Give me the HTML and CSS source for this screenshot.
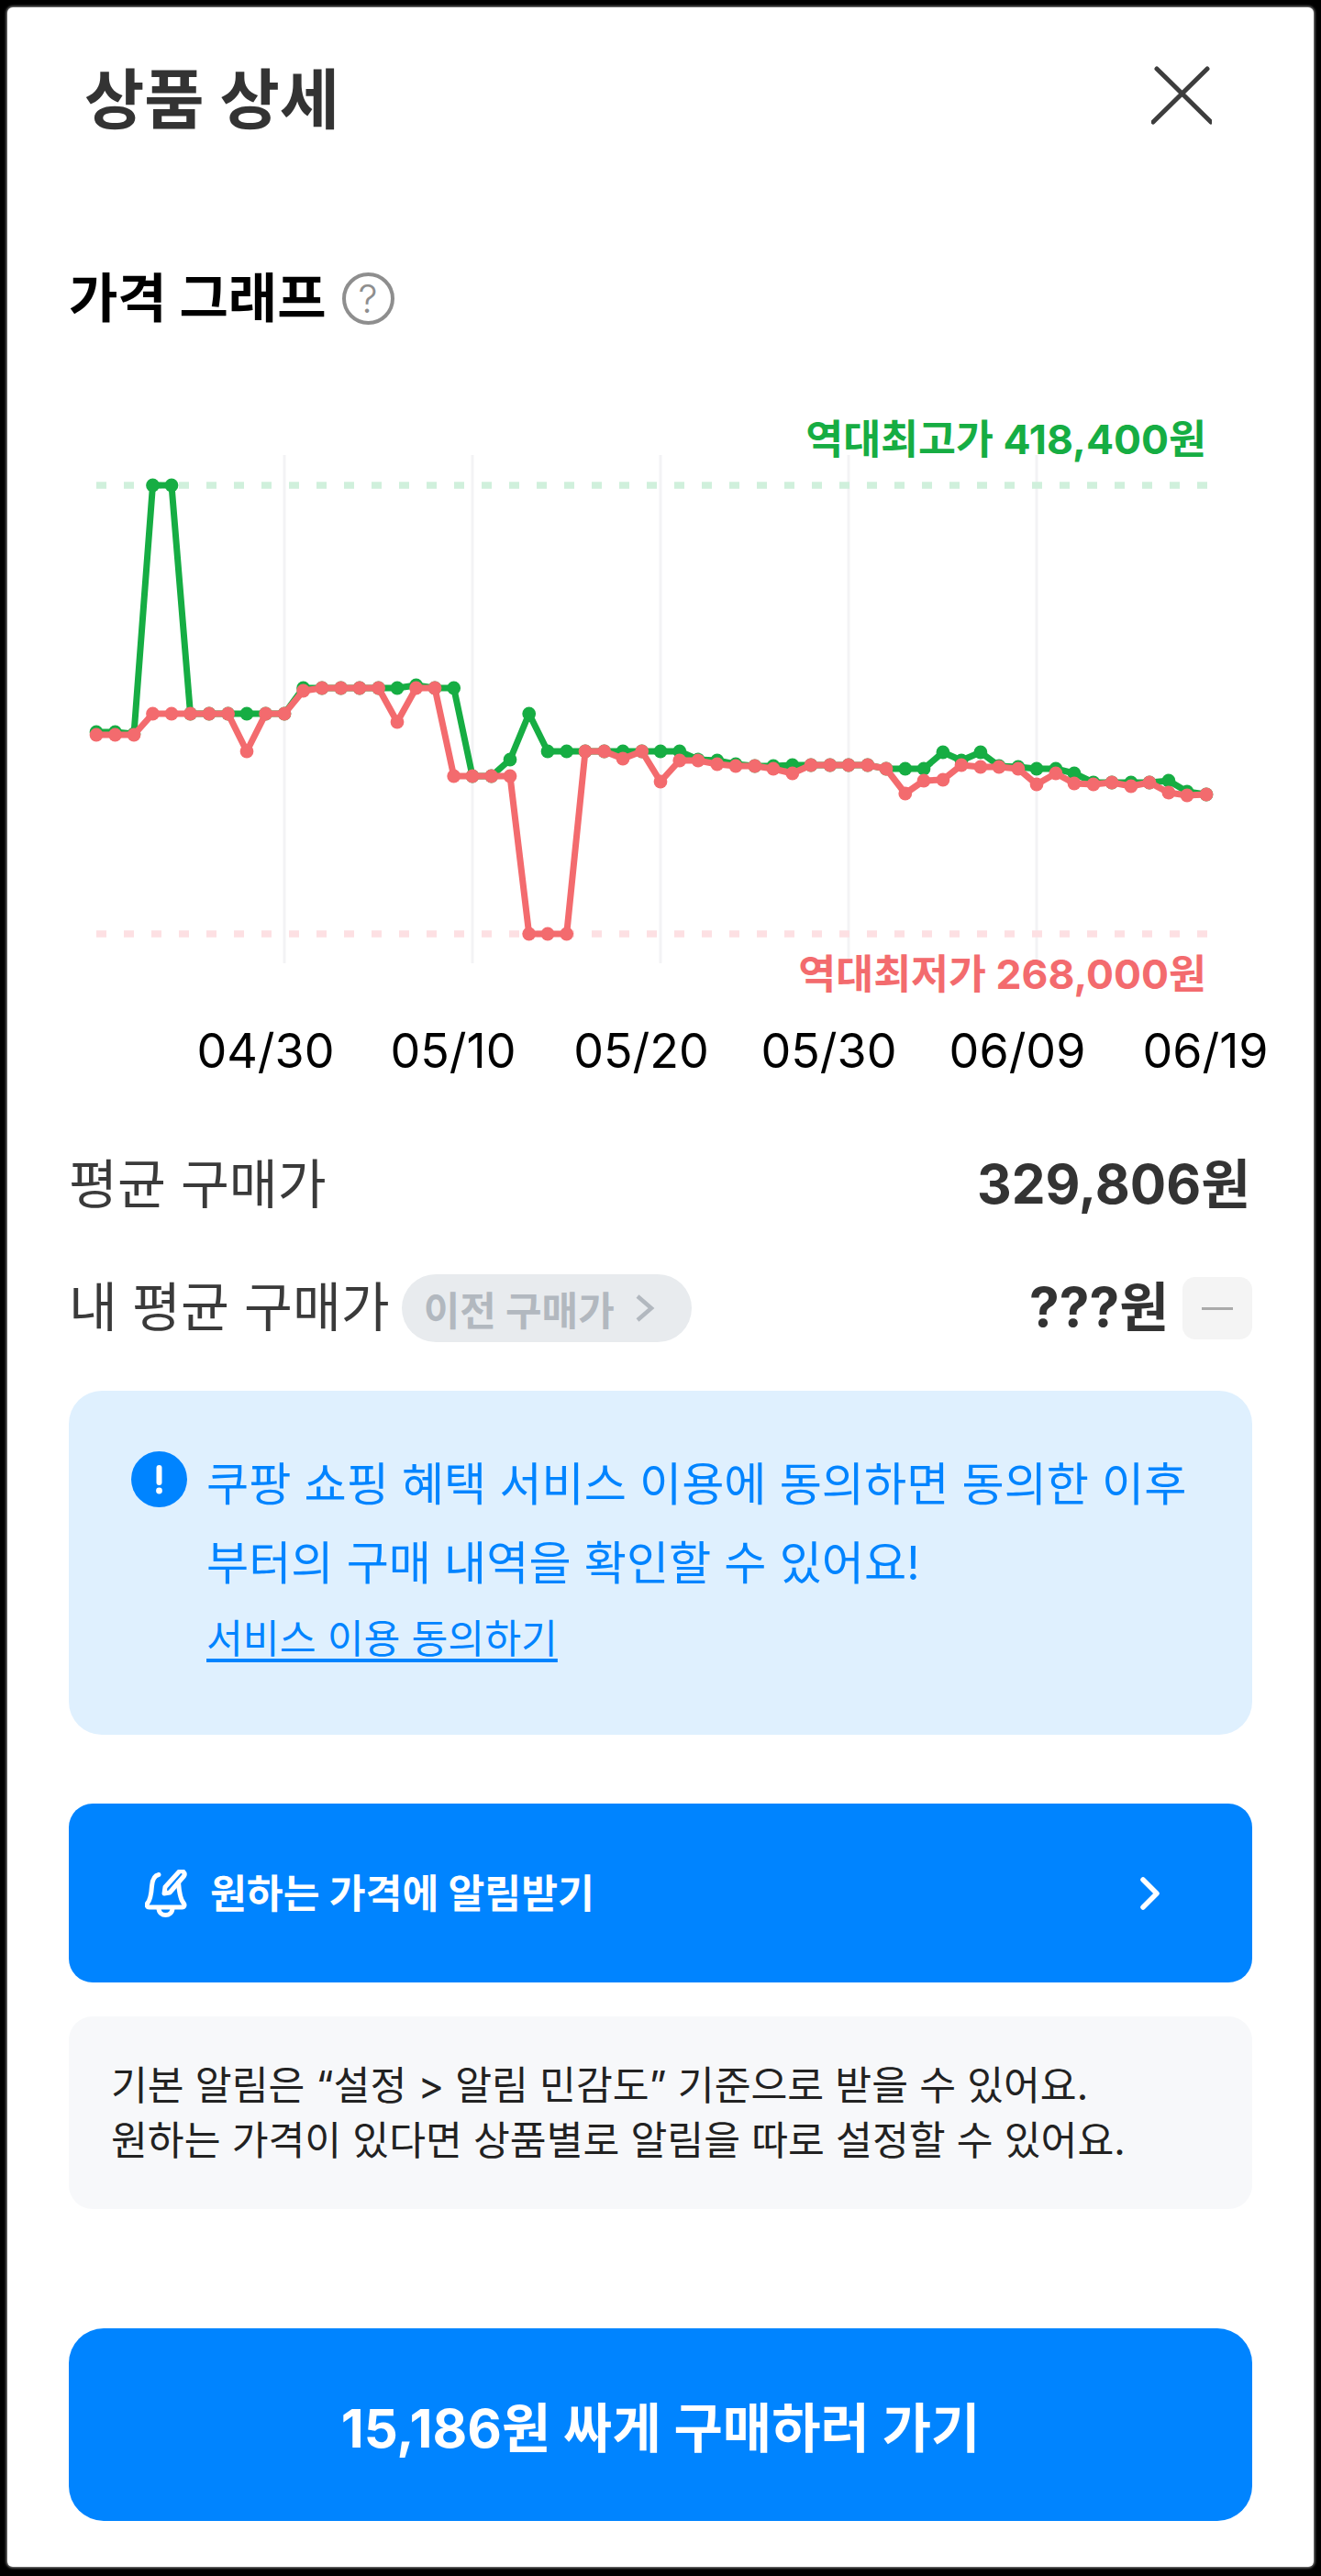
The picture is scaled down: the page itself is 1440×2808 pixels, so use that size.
FILE: index.html
```html
<!DOCTYPE html>
<html lang="ko">
<head>
    <meta charset="utf-8">
    <title>상품 상세</title>
    <link rel="stylesheet" href="styles.css">
</head>
<body>
    <main class="panel">
        <header class="header">
            <h1 class="header-title">상품 상세</h1>
            <svg class="close-icon" width="66" height="64" viewBox="0 0 66 64">
                <path d="M6 3L65 61M61 3L2 61"/>
            </svg>
        </header>

        <div class="section-title">
            <h2>가격 그래프</h2>
            <span class="help-icon">?</span>
        </div>

        <svg class="chart" width="1290" height="730" viewBox="75 440 1290 730">
            <defs>
                <marker id="dotGreen" markerUnits="userSpaceOnUse" markerWidth="16" markerHeight="16" refX="8" refY="8">
                    <circle class="dot-green" cx="8" cy="8" r="7.4"/>
                </marker>
                <marker id="dotRed" markerUnits="userSpaceOnUse" markerWidth="16" markerHeight="16" refX="8" refY="8">
                    <circle class="dot-red" cx="8" cy="8" r="7.4"/>
                </marker>
            </defs>

            <!-- grid -->
            <path class="grid" d="M310 496V1050M515 496V1050M720 496V1050M925 496V1050M1130 496V1050"/>
            <path class="limit-high" d="M105 529H1316"/>
            <path class="limit-low" d="M105 1018H1316"/>

            <text class="limit-label label-high" x="1315" y="495">역대최고가 418,400원</text>
            <text class="limit-label label-low" x="1315" y="1078">역대최저가 268,000원</text>

            <!-- 최고가 -->
            <polyline class="line-green" points="105,798 125.5,798 146,800 166.5,529 187,529 207.5,778 228,778 248.6,778 269,778 289.6,778 310,778 330.6,750 351,750 371.6,750 392,750 412.6,750 433,750 453.6,747 474,750 494.7,750 515,846 535.7,846 556,828 576.7,778 597,819 617.7,819 638,819 658.7,819 679,819 699.7,819 720,819 740.8,819 761,828 781.8,829 802,833 822.8,835 843,835 863.8,834 884,834 904.8,834 925,834 945.8,834 966,838 986.8,838 1007,838 1027.9,820 1048,829 1068.9,820 1089,835 1109.9,836 1130,838 1150.9,838 1171,843 1191.9,853 1212,853 1232.9,853 1253,853 1273.9,851 1294,863 1315,866"/>
            <!-- 최저가 -->
            <polyline class="line-red" points="105,801 125.5,801 146,801 166.5,778 187,778 207.5,778 228,778 248.6,778 269,819 289.6,778 310,778 330.6,753 351,750 371.6,750 392,750 412.6,750 433,787 453.6,750 474,750 494.7,846 515,846 535.7,846 556,846 576.7,1018 597,1018 617.7,1018 638,819 658.7,819 679,827 699.7,819 720,852 740.8,829 761,829 781.8,833 802,835 822.8,835 843,838 863.8,843 884,834 904.8,834 925,834 945.8,834 966,838 986.8,865 1007,851 1027.9,850 1048,834 1068.9,836 1089,836 1109.9,838 1130,855 1150.9,843 1171,854 1191.9,855 1212,853 1232.9,857 1253,853 1273.9,864 1294,867 1315,866"/>

            <text class="tick" x="289.5" y="1164">04/30</text>
            <text class="tick" x="494" y="1164">05/10</text>
            <text class="tick" x="699" y="1164">05/20</text>
            <text class="tick" x="903.5" y="1164">05/30</text>
            <text class="tick" x="1109" y="1164">06/09</text>
            <text class="tick" x="1314" y="1164">06/19</text>
        </svg>

        <div class="price-row price-row-first">
            <span class="price-label">평균 구매가</span>
            <span class="price-value">329,806원</span>
        </div>

        <div class="price-row price-row-second">
            <div class="price-left">
                <span class="price-label">내 평균 구매가</span>
                <span class="history-pill">이전 구매가
                    <svg width="22" height="34" viewBox="0 0 22 34"><path d="M3 4L18 17L3 30"/></svg>
                </span>
            </div>
            <div class="price-right">
                <span class="price-value">???원</span>
                <span class="toggle-box"><i></i></span>
            </div>
        </div>

        <section class="info-box">
            <svg class="info-icon" width="61" height="61" viewBox="0 0 61 61">
                <circle cx="30.5" cy="30.5" r="30.5"/>
                <rect x="27.5" y="15" width="6" height="22" rx="3"/>
                <circle cx="30.5" cy="43" r="3.4"/>
            </svg>
            <div class="info-text">
                <p>쿠팡 쇼핑 혜택 서비스 이용에 동의하면 동의한 이후<br>부터의 구매 내역을 확인할 수 있어요!</p>
                <a class="info-link" href="#">서비스 이용 동의하기</a>
            </div>
        </section>

        <button class="alert-button" type="button">
            <span class="alert-left">
                <svg class="bell-icon" width="48" height="52" viewBox="0 0 48 52">
                    <path d="M15 5.5C9.5 6.5 8 12 7.5 18 7 26 6 33 2.5 37 1.5 38.5 2 41 4.5 41H40.5C43 41 43.5 38.5 42.5 37 39.5 34 37.5 27 36.5 14"/>
                    <path d="M15 42c0 10 15 10 15 0"/>
                    <path d="M21 26l1-7L37 2.5c1.5-1.5 3.5-1.5 5 0s1.5 3 .5 4.5L27 25z"/>
                </svg>
                <span class="alert-text">원하는 가격에 알림받기</span>
            </span>
            <svg class="chevron-icon" width="26" height="36" viewBox="0 0 26 36"><path d="M5 3L20 18L5 33"/></svg>
        </button>

        <p class="note-box">기본 알림은 “설정 &gt; 알림 민감도” 기준으로 받을 수 있어요.<br>원하는 가격이 있다면 상품별로 알림을 따로 설정할 수 있어요.</p>

        <button class="buy-button" type="button">15,186원 싸게 구매하러 가기</button>
    </main>
</body>
</html>
```

FILE: styles.css
```css
* {
    box-sizing: border-box;
}
html, body {
    margin: 0;
    background-color: #000;
}
body {
    font-family: Inter, "Noto Sans CJK KR", sans-serif;
    color: #333;
    padding: 8px 8px 10px;
}
h1, h2, p {
    margin: 0;
}
.panel {
    height: 2790px;
    padding: 0 67px;
    background-color: #fff;
    border-radius: 6px;
    box-shadow: 0 0 3px 1px #999;
}

/* header */
.header {
    height: 200px;
    display: flex;
    justify-content: space-between;
    align-items: center;
}
.header-title {
    margin-left: 17px;
    font-size: 71px;
    font-weight: 700;
    line-height: 80px;
    color: #333;
}
.close-icon {
    margin-right: 44px;
    margin-top: -8px;
}
.close-icon path {
    fill: none;
    stroke: #3d3d3d;
    stroke-width: 5;
    stroke-linecap: round;
}
.section-title {
    margin-top: 84px;
    height: 66px;
    display: flex;
    align-items: center;
    gap: 17px;
}
.section-title h2 {
    font-size: 58px;
    font-weight: 700;
    line-height: 66px;
    color: #000;
}
.help-icon {
    width: 57px;
    height: 57px;
    border: 4px solid #8e8e8e;
    border-radius: 50%;
    display: flex;
    align-items: center;
    justify-content: center;
    font-size: 42px;
    font-weight: 300;
    color: #8e8e8e;
}

/* chart */
.chart {
    display: block;
    margin-top: 82px;
    overflow: visible;
}
.grid {
    fill: none;
    stroke: #f3f3f5;
    stroke-width: 3;
}
.limit-high, .limit-low {
    fill: none;
    stroke-width: 7.5;
    stroke-dasharray: 11 19;
}
.limit-high {
    stroke: #d0f0dc;
}
.limit-low {
    stroke: #fde0e3;
}
.limit-label {
    font-size: 44.5px;
    font-weight: 700;
    text-anchor: end;
}
.label-high {
    fill: #16ad43;
}
.label-low {
    fill: #f36b6e;
}
.line-green, .line-red {
    fill: none;
    stroke-width: 7;
    stroke-linejoin: round;
}
.line-green {
    stroke: #16ad43;
    marker: url(#dotGreen);
}
.line-red {
    stroke: #f36b6e;
    marker: url(#dotRed);
}
.dot-green {
    fill: #16ad43;
}
.dot-red {
    fill: #f36b6e;
}
.tick {
    font-size: 52px;
    fill: #000;
    text-anchor: middle;
}

/* price rows */
.price-row {
    height: 74px;
    display: flex;
    justify-content: space-between;
    align-items: center;
}
.price-row-first {
    margin-top: 85px;
}
.price-row-second {
    margin-top: 60px;
}
.price-left, .price-right {
    display: flex;
    align-items: center;
}
.price-left {
    gap: 13px;
}
.price-right {
    gap: 15px;
}
.price-label {
    font-size: 57.5px;
    line-height: 70px;
    color: #3a3a3a;
}
.price-row-first .price-label {
    margin-top: -2px;
}
.price-row-second .price-label {
    margin-top: -3px;
}
.price-value {
    font-size: 58.5px;
    line-height: 70px;
    font-weight: 700;
    color: #333;
    margin-top: -3px;
}
.price-row-first .price-value {
    margin-right: 2px;
}
.history-pill {
    height: 74px;
    padding: 0 40px 0 24px;
    display: flex;
    align-items: center;
    gap: 22px;
    border-radius: 37px;
    background-color: #e8ebee;
    font-size: 43px;
    font-weight: 700;
    color: #b2b8bf;
}
.history-pill path {
    fill: none;
    stroke: #b2b8bf;
    stroke-width: 4.5;
}
.toggle-box {
    width: 76px;
    height: 68px;
    display: flex;
    align-items: center;
    justify-content: center;
    border-radius: 14px;
    background-color: #f4f4f4;
}
.toggle-box i {
    width: 34px;
    height: 3px;
    background-color: #aaa;
}

/* info box */
.info-box {
    margin-top: 53px;
    height: 375px;
    padding: 59px 0 0 68px;
    display: flex;
    gap: 21px;
    border-radius: 36px;
    background-color: #dff0fe;
}
.info-icon {
    flex: none;
    margin-top: 7px;
}
.info-icon circle:first-child {
    fill: #0084ff;
}
.info-icon rect, .info-icon circle {
    fill: #fff;
}
.info-text p {
    font-size: 50.2px;
    line-height: 86px;
    color: #0084ff;
    white-space: nowrap;
}
.info-link {
    display: block;
    margin-top: 9px;
    font-size: 43.3px;
    line-height: 60px;
    color: #0084ff;
    text-underline-offset: 6px;
}

/* buttons */
.alert-button, .buy-button {
    display: flex;
    width: 100%;
    align-items: center;
    border: none;
    background-color: #0084ff;
    color: #fff;
    font-family: inherit;
    font-weight: 700;
}
.alert-button {
    margin-top: 75px;
    height: 195px;
    padding: 0 98px 0 83px;
    justify-content: space-between;
    border-radius: 26px;
    font-size: 43.3px;
}
.alert-left {
    display: flex;
    align-items: center;
    gap: 23px;
}
.alert-text {
    margin-top: -6px;
}
.bell-icon path, .chevron-icon path {
    fill: none;
    stroke: #fff;
    stroke-linecap: round;
    stroke-linejoin: round;
}
.bell-icon path {
    stroke-width: 5;
}
.chevron-icon path {
    stroke-width: 5.5;
}
.note-box {
    margin-top: 37px;
    height: 210px;
    padding: 45px 46px;
    border-radius: 26px;
    background-color: #f7f8fa;
    font-size: 43.3px;
    line-height: 60px;
    color: #222;
}
.buy-button {
    margin-top: 130px;
    height: 210px;
    justify-content: center;
    border-radius: 38px;
    font-size: 58px;
}
```
